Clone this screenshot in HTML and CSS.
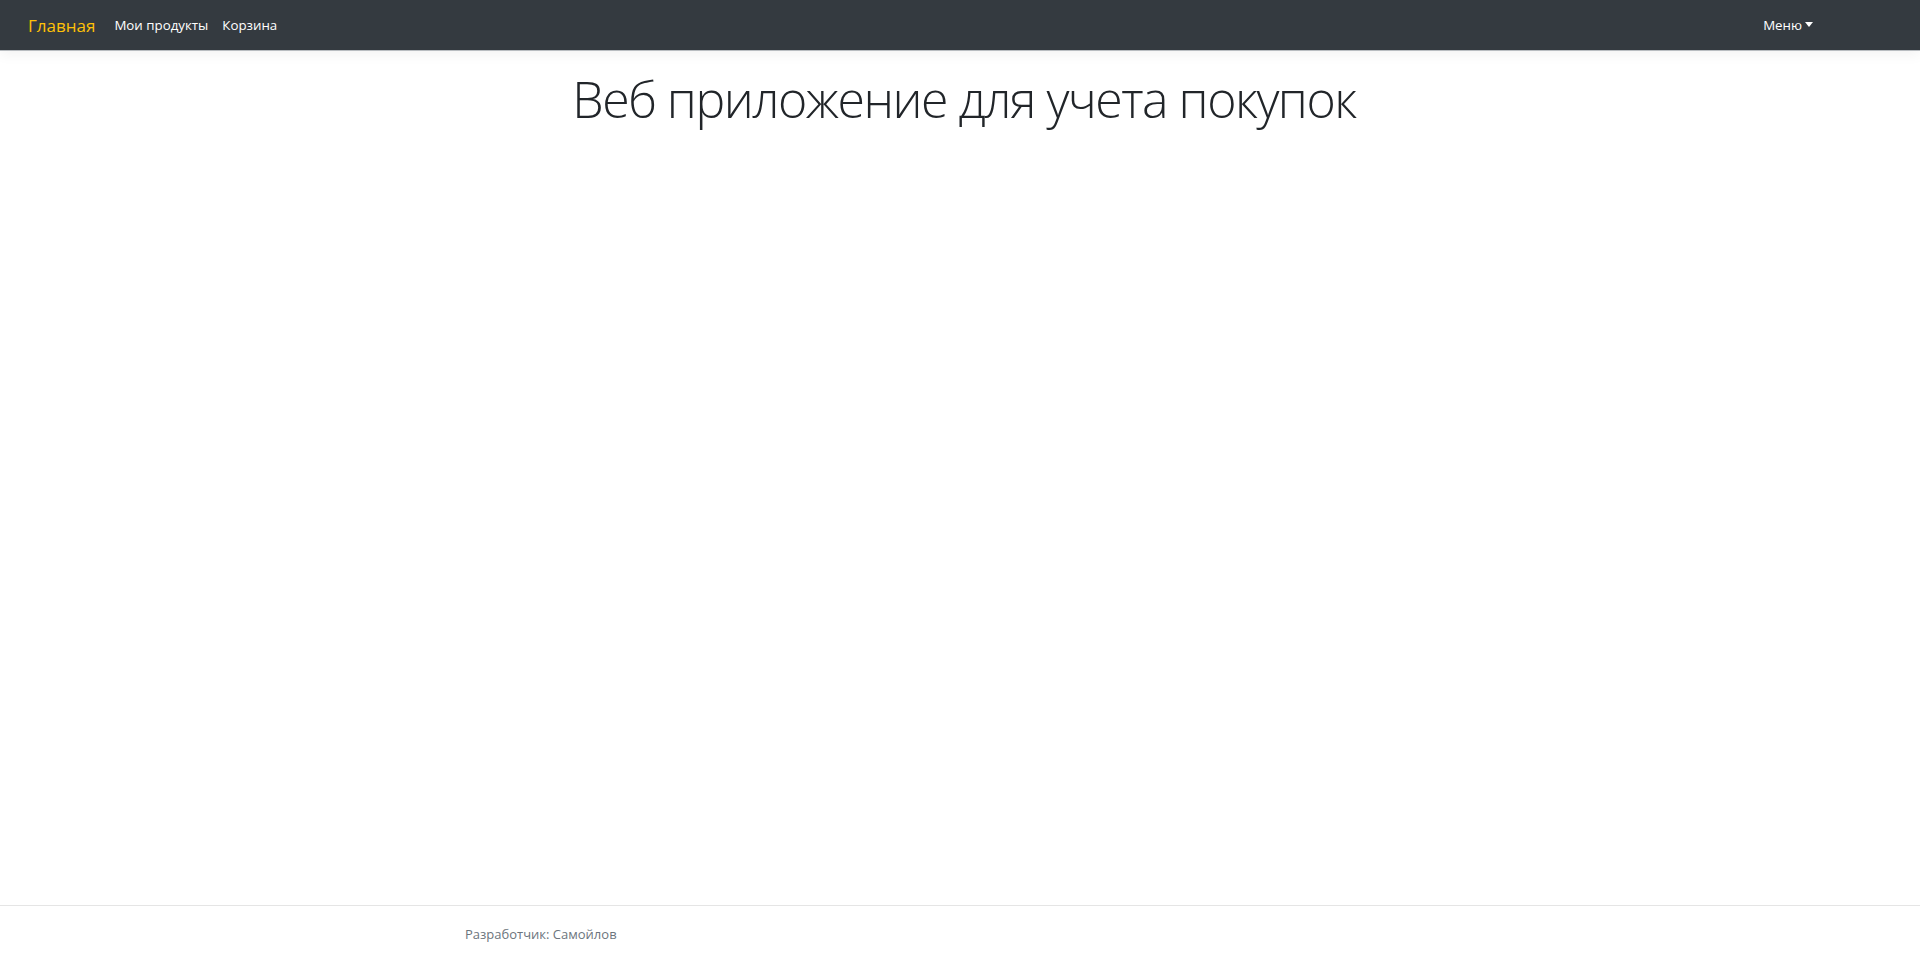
FILE: index.html
```html
<!DOCTYPE html>
<html lang="ru">
<head>
<meta charset="utf-8">
<title>Главная</title>
<link rel="stylesheet" href="styles.css">
</head>
<body>
<div class="page">
  <header class="navbar">
    <a class="brand" href="#">Главная</a>
    <nav class="nav-links">
      <a class="nav-link" href="#">Мои продукты</a>
      <a class="nav-link" href="#">Корзина</a>
    </nav>
    <div class="nav-right">
      <a class="nav-link dropdown" href="#">Меню<span class="caret"></span></a>
    </div>
  </header>
  <main class="main">
    <h1 class="display">Веб приложение для учета покупок</h1>
  </main>
  <footer class="footer">
    <div class="footer-inner">Разработчик: Самойлов</div>
  </footer>
</div>
</body>
</html>
```

FILE: styles.css
```css
html, body {
  margin: 0;
  padding: 0;
  height: 100%;
}
body {
  font-family: "Open Sans", "Noto Sans", sans-serif;
  color: #212529;
  background: #fff;
}
.page {
  display: flex;
  flex-direction: column;
  height: 100vh;
  overflow: hidden;
}
.navbar {
  display: flex;
  align-items: center;
  height: 50px;
  padding: 0 0 0 28px;
  background: #343a40;
  border-bottom: 1px solid #b8bcc0;
  box-shadow: 0 4px 12px rgba(0, 0, 0, 0.05);
  flex: none;
}
.brand {
  color: #ffc107;
  font-size: 17px;
  text-decoration: none;
  margin-right: 12px;
}
.nav-links {
  display: flex;
  gap: 0;
}
.nav-link {
  color: #fff;
  font-size: 13.3px;
  text-decoration: none;
  padding: 0 7px;
}
.nav-right {
  margin-left: auto;
  padding-right: 107px;
  display: flex;
}
.dropdown {
  display: flex;
  align-items: center;
  padding-right: 0;
}
.caret {
  display: inline-block;
  width: 0;
  height: 0;
  margin-left: 3px;
  border-top: 5px solid #fff;
  border-left: 4px solid transparent;
  border-right: 4px solid transparent;
  position: relative;
  top: -1px;
}
.main {
  flex: 1;
  text-align: center;
  padding: 16px 0 0 8px;
}
.display {
  margin: 0;
  font-size: 50px;
  font-weight: 300;
  line-height: 1.3;
  letter-spacing: -1.5px;
}
.footer {
  flex: none;
  height: 48px;
  border-top: 1px solid #e5e5e5;
  color: #6c757d;
  font-size: 13px;
  line-height: 56px;
  white-space: nowrap;
}
.footer-inner {
  padding-left: 465px;
}
```
